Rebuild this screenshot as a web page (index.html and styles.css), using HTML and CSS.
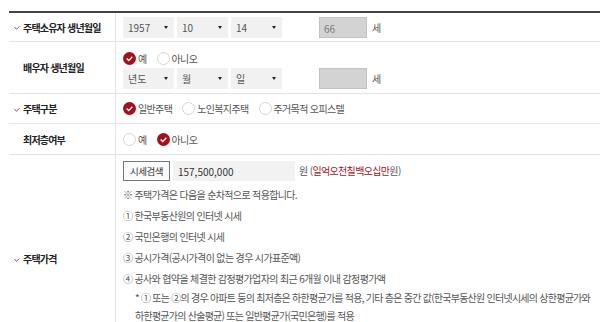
FILE: index.html
```html
<!DOCTYPE html>
<html lang="ko">
<head>
    <meta charset="UTF-8">
    <title>주택가격</title>
    <link rel="stylesheet" href="styles.css">
</head>
<body>
<div class="wrap">
    <table class="form-tbl">
        <tr class="r1">
            <th><svg class="req" width="6" height="4" viewBox="0 0 6 4"><polyline points="0.4,1 2.4,3.3 5.6,0.3" fill="none" stroke="#b23a44" stroke-width="0.9"/></svg>주택소유자 생년월일</th>
            <td>
                <div class="line">
                    <div class="sel">1957</div>
                    <div class="sel">10</div>
                    <div class="sel">14</div>
                    <div class="age">66</div>
                    <span class="unit">세</span>
                </div>
            </td>
        </tr>
        <tr class="r2">
            <th>배우자 생년월일</th>
            <td>
                <div class="radios">
                    <span class="opt"><svg class="rd" width="13" height="13" viewBox="0 0 13 13"><circle cx="6.5" cy="6.5" r="6.5" fill="#a4111d"/><polyline points="3.7,6.6 5.7,8.6 9.3,4.7" fill="none" stroke="#fff" stroke-width="1.4"/></svg>예</span>
                    <span class="opt"><svg class="rd" width="13" height="13" viewBox="0 0 13 13"><circle cx="6.5" cy="6.5" r="6" fill="#fff" stroke="#d4d4d4"/></svg>아니오</span>
                </div>
                <div class="line">
                    <div class="sel">년도</div>
                    <div class="sel">월</div>
                    <div class="sel">일</div>
                    <div class="age"></div>
                    <span class="unit">세</span>
                </div>
            </td>
        </tr>
        <tr class="r3">
            <th><svg class="req" width="6" height="4" viewBox="0 0 6 4"><polyline points="0.4,1 2.4,3.3 5.6,0.3" fill="none" stroke="#b23a44" stroke-width="0.9"/></svg>주택구분</th>
            <td>
                <div class="radios">
                    <span class="opt"><svg class="rd" width="13" height="13" viewBox="0 0 13 13"><circle cx="6.5" cy="6.5" r="6.5" fill="#a4111d"/><polyline points="3.7,6.6 5.7,8.6 9.3,4.7" fill="none" stroke="#fff" stroke-width="1.4"/></svg>일반주택</span>
                    <span class="opt"><svg class="rd" width="13" height="13" viewBox="0 0 13 13"><circle cx="6.5" cy="6.5" r="6" fill="#fff" stroke="#d4d4d4"/></svg>노인복지주택</span>
                    <span class="opt"><svg class="rd" width="13" height="13" viewBox="0 0 13 13"><circle cx="6.5" cy="6.5" r="6" fill="#fff" stroke="#d4d4d4"/></svg>주거목적 오피스텔</span>
                </div>
            </td>
        </tr>
        <tr class="r4">
            <th>최저층여부</th>
            <td>
                <div class="radios">
                    <span class="opt"><svg class="rd" width="13" height="13" viewBox="0 0 13 13"><circle cx="6.5" cy="6.5" r="6" fill="#fff" stroke="#d4d4d4"/></svg>예</span>
                    <span class="opt"><svg class="rd" width="13" height="13" viewBox="0 0 13 13"><circle cx="6.5" cy="6.5" r="6.5" fill="#a4111d"/><polyline points="3.7,6.6 5.7,8.6 9.3,4.7" fill="none" stroke="#fff" stroke-width="1.4"/></svg>아니오</span>
                </div>
            </td>
        </tr>
        <tr class="r5">
            <th><svg class="req" width="6" height="4" viewBox="0 0 6 4"><polyline points="0.4,1 2.4,3.3 5.6,0.3" fill="none" stroke="#b23a44" stroke-width="0.9"/></svg>주택가격</th>
            <td>
                <div class="line">
                    <button class="btn">시세검색</button>
                    <div class="price">157,500,000</div>
                    <span class="won">원 (<em>일억오천칠백오십만</em>원)</span>
                </div>
                <p class="info">※ 주택가격은 다음을 순차적으로 적용합니다.</p>
                <ul class="steps">
                    <li>① 한국부동산원의 인터넷 시세</li>
                    <li>② 국민은행의 인터넷 시세</li>
                    <li>③ 공시가격(공시가격이 없는 경우 시가표준액)</li>
                    <li>④ 공사와 협약을 체결한 감정평가업자의 최근 6개월 이내 감정평가액</li>
                </ul>
                <p class="note">* ① 또는 ②의 경우 아파트 등의 최저층은 하한평균가를 적용, 기타 층은 중간 값(한국부동산원 인터넷시세의 상한평균가와<br>하한평균가의 산술평균) 또는 일반평균가(국민은행)를 적용</p>
            </td>
        </tr>
    </table>
</div>
</body>
</html>
```

FILE: styles.css
```css
body {
    margin: 0;
    background: #fff;
    font-family: "Noto Sans CJK KR", "Noto Sans", sans-serif;
    color: #555;
    overflow: hidden;
}

.wrap {
    padding: 11px 0 0 9px;
}

.form-tbl {
    width: 591px;
    border-collapse: collapse;
    border-top: 2px solid #444;
}

.form-tbl th {
    width: 92px;
    padding: 0 0 0 14px;
    text-align: left;
    vertical-align: middle;
    font-size: 10px;
    font-weight: bold;
    letter-spacing: -0.8px;
    color: #222;
    border-right: 1px solid #e4e4e4;
    border-bottom: 1px solid #e4e4e4;
    white-space: nowrap;
}

.req {
    display: inline-block;
    margin: 0 3px 1px -9px;
    vertical-align: middle;
}

.form-tbl td {
    padding-left: 7px;
    vertical-align: top;
    font-size: 10px;
    letter-spacing: -0.65px;
    border-bottom: 1px solid #e4e4e4;
}

.r1 td { padding-top: 4px; padding-bottom: 3px; }
.r2 td { padding-top: 7px; padding-bottom: 4px; }
.r3 td { padding-top: 5px; padding-bottom: 5px; }
.r4 td { padding-top: 6px; padding-bottom: 5px; }
.r5 td { padding-top: 5px; padding-bottom: 37px; }

.line {
    display: flex;
    align-items: center;
    height: 21px;
}

.sel {
    display: flex;
    align-items: center;
    justify-content: space-between;
    box-sizing: border-box;
    width: 51px;
    height: 21px;
    margin-right: 3px;
    padding: 0 6px 0 5px;
    background: #f1f1f1;
    font-size: 10px;
    letter-spacing: 0;
    color: #555;
}

.sel::after {
    content: "";
    border-left: 2px solid transparent;
    border-right: 2px solid transparent;
    border-top: 3px solid #222;
}

.age {
    box-sizing: border-box;
    width: 48px;
    height: 21px;
    margin-left: 34px;
    padding: 3px 0 0 4px;
    background: #d3d3d3;
    border: 1px solid #c2c2c2;
    font-size: 10px;
    letter-spacing: 0;
    color: #777;
}

.unit {
    margin-left: 5px;
    font-size: 10px;
    color: #555;
}

.radios {
    display: flex;
    align-items: center;
    height: 18px;
    margin-bottom: 1px;
}

.opt {
    display: inline-flex;
    align-items: center;
    margin-right: 10px;
    color: #555;
}

.rd {
    margin-right: 2px;
}

.btn {
    box-sizing: border-box;
    height: 20px;
    padding: 0 6px;
    border: 1px solid #777;
    background: #fafafa;
    font-family: inherit;
    font-size: 9.5px;
    letter-spacing: -0.5px;
    color: #333;
}

.price {
    box-sizing: border-box;
    width: 122px;
    height: 20px;
    margin-left: 3px;
    padding: 3px 0 0 5px;
    background: #f2f2f2;
    font-size: 10px;
    letter-spacing: 0;
    color: #333;
}

.won {
    margin-left: 4px;
    color: #555;
}

.won em {
    font-style: normal;
    color: #a8111e;
}

.info {
    margin: 4px 0 0;
    line-height: 20px;
}

.steps {
    margin: 0;
    padding: 0;
    list-style: none;
}

.steps li {
    line-height: 21px;
}

.note {
    margin: 0;
    padding-left: 12px;
    line-height: 18px;
    letter-spacing: -0.75px;
    white-space: nowrap;
}
```
